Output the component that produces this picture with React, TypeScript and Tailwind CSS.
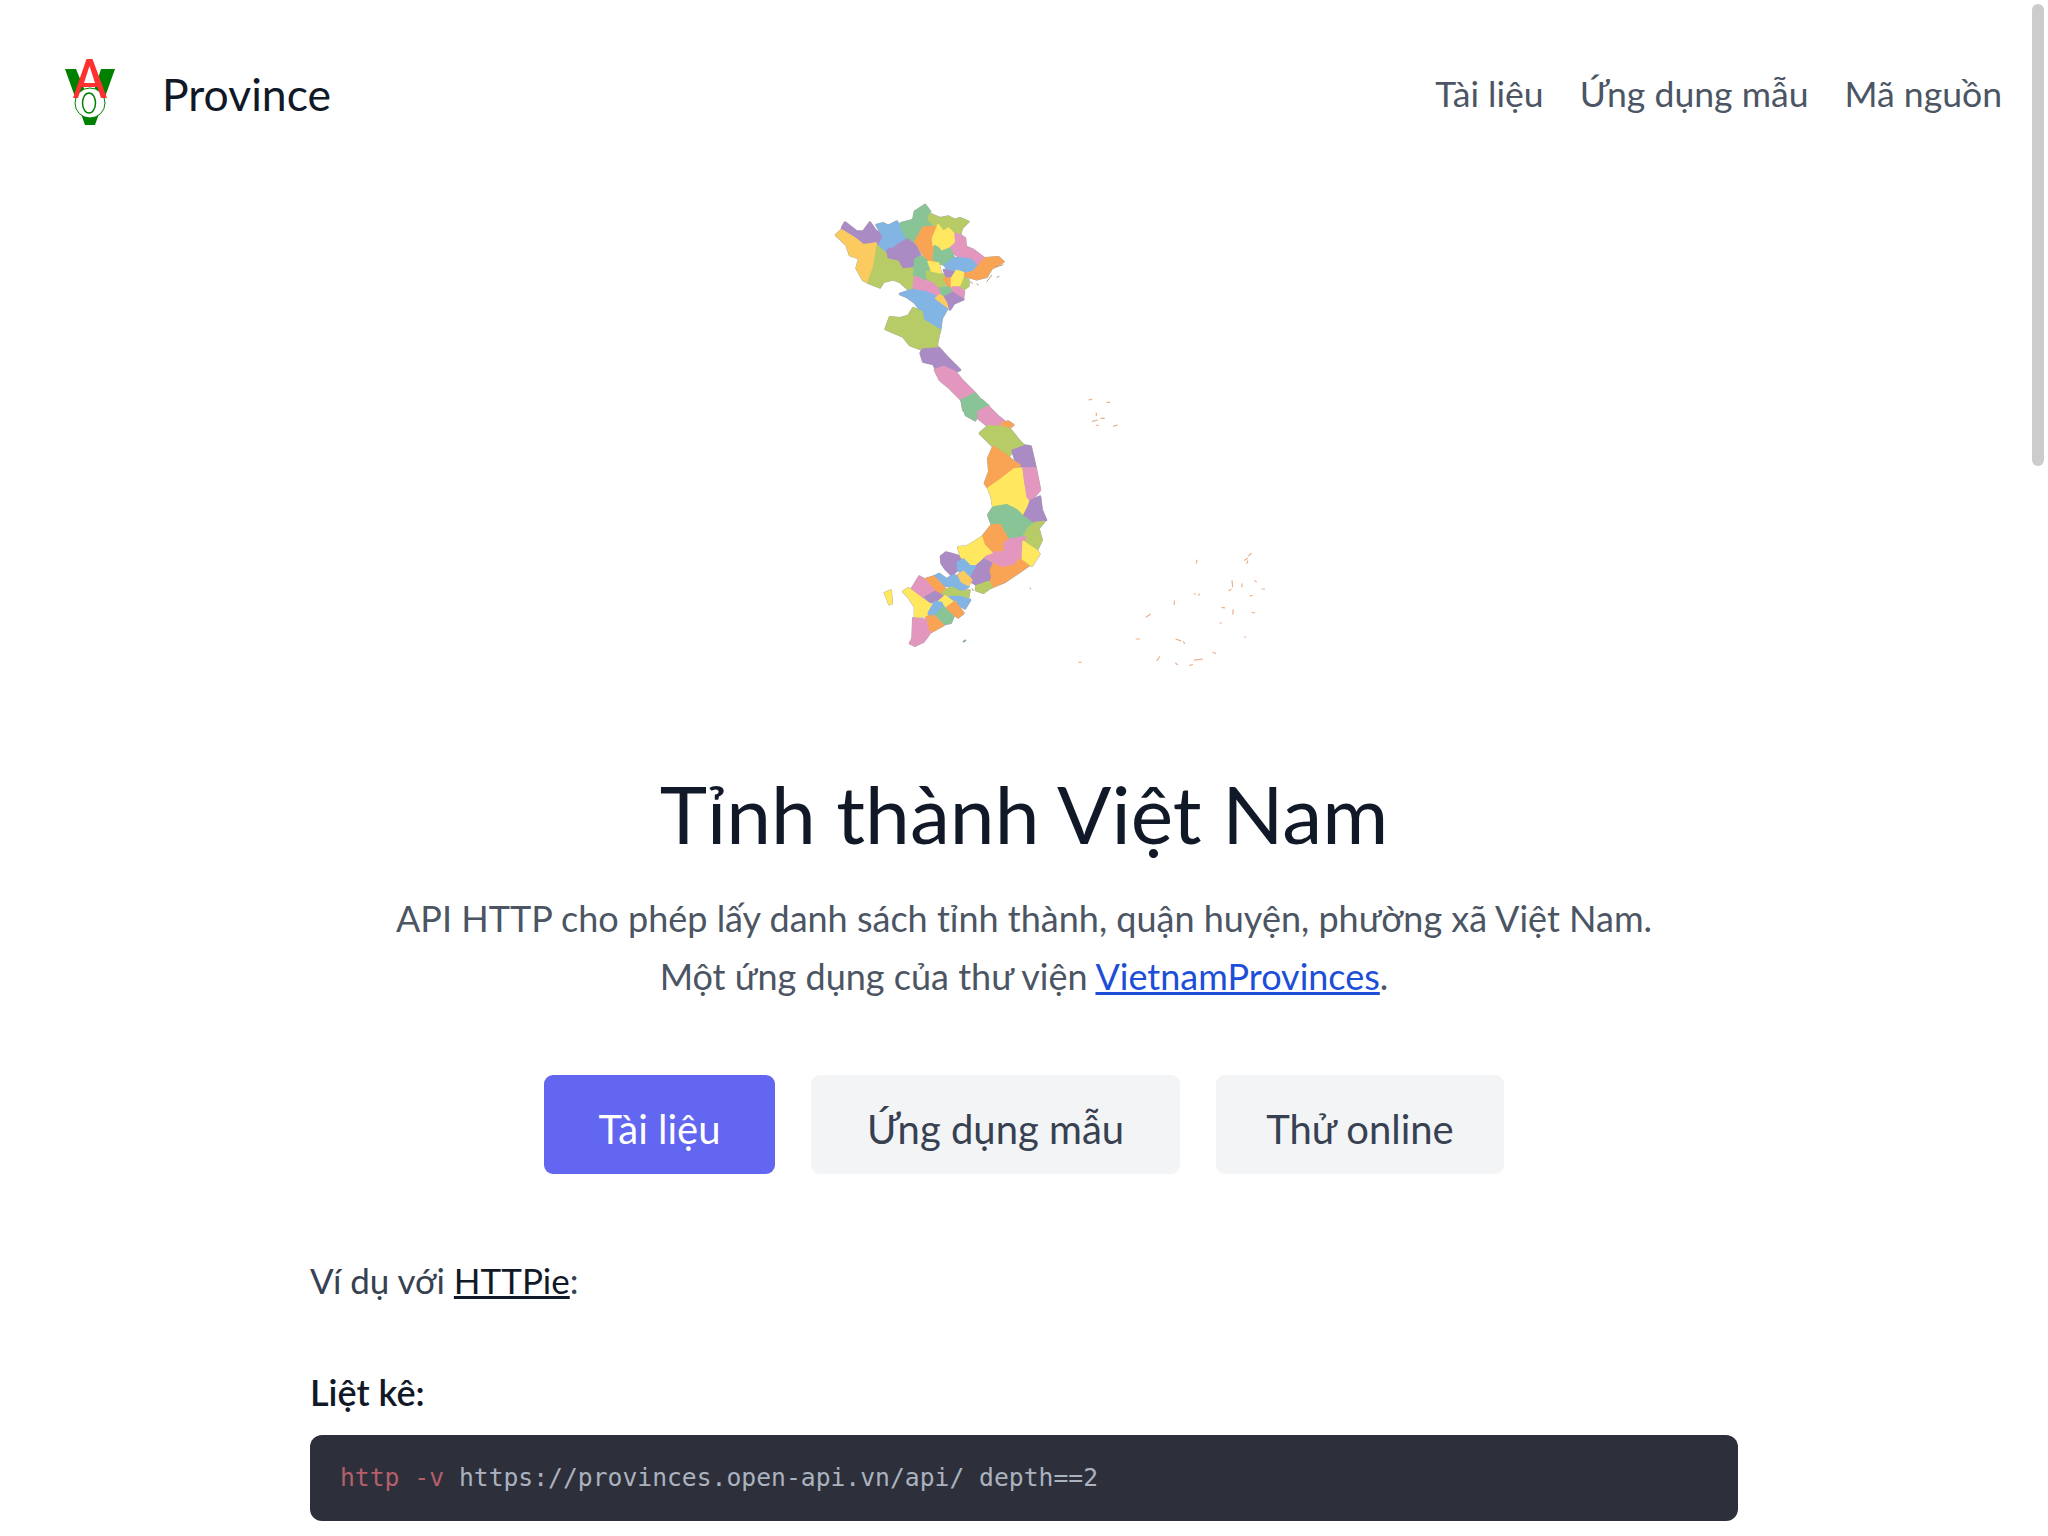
const C = {
  o: '#fccb5f',
  p: '#ab8bc4',
  b: '#82b4e4',
  g: '#88c496',
  l: '#b7cc67',
  a: '#f9a455',
  y: '#ffe75f',
  k: '#e497be',
};

// traced from the 3x crops, so each group gets its own translate + scale
const NORTH: [string, string][] = [
  ['p', '128,140 135,128 170,155 190,155 210,128 225,150 250,170 235,200 228,190 190,195 165,175 125,150'],
  ['o', '108,165 125,150 165,175 190,195 228,190 232,215 222,260 215,285 205,308 190,300 170,265 178,235 150,225 140,195'],
  ['b', '230,135 250,130 265,138 290,125 305,145 322,180 300,190 280,205 262,210 262,225 240,210 235,200 250,170'],
  ['g', '303,130 340,120 345,95 375,75 390,95 385,118 405,140 370,142 345,185 322,180 305,145'],
  ['l', '385,118 390,102 420,115 445,110 465,120 480,115 505,125 485,145 480,165 460,160 445,145 430,155 415,135 405,140'],
  ['a', '345,185 370,142 405,140 398,180 405,200 400,245 385,245 365,215'],
  ['k', '460,160 480,165 495,175 497,200 520,210 553,235 540,255 515,240 490,235 470,225 450,205 462,185'],
  ['y', '415,135 430,155 445,145 460,160 462,185 430,215 415,195 400,195 398,175'],
  ['g', '405,198 425,215 450,205 462,235 435,255 420,250 400,235'],
  ['l', '232,198 262,225 298,240 310,262 342,258 342,285 358,300 345,320 325,328 300,305 280,298 250,305 240,322 205,308 222,260'],
  ['p', '262,210 280,205 300,190 322,178 345,195 362,228 345,238 342,258 310,262 298,240 265,232'],
  ['g', '345,238 362,228 385,245 392,262 380,275 382,295 358,298 342,285'],
  ['l', '380,275 395,272 420,280 440,290 432,320 420,325 395,305 382,295'],
  ['y', '385,245 415,250 422,278 395,272'],
  ['b', '435,255 462,235 490,235 515,240 530,258 515,278 490,275 460,272 440,265'],
  ['p', '432,270 460,275 465,290 440,293'],
  ['a', '478,285 520,275 555,235 595,232 610,245 575,265 560,290 530,298 510,292'],
  ['a', '432,295 455,295 458,322 445,318'],
  ['l', '488,295 505,300 505,318 490,328 478,320'],
  ['y', '455,295 470,272 490,278 488,292 478,318 455,318'],
  ['k', '345,290 380,305 395,308 420,330 425,345 405,352 375,335 340,322'],
  ['g', '420,325 445,322 458,335 435,350 425,345'],
  ['k', '458,322 478,322 492,335 488,358 460,350'],
  ['b', '300,342 335,330 375,335 420,355 445,380 425,415 420,450 390,430 370,420 365,395 345,368 320,350'],
  ['o', '420,345 452,368 445,382 408,355'],
  ['p', '435,350 458,338 490,358 462,370 450,388 445,368'],
  ['l', '340,385 365,395 370,420 420,450 415,470 410,495 418,510 370,510 330,495 310,470 257,447 270,412 300,415 325,408'],
  ['p', '368,508 418,505 440,530 480,570 465,575 410,570 400,552 370,545 362,520'],
  ['k', '405,570 430,560 465,575 485,600 525,640 510,655 485,660 450,625 420,600'],
  ['g', '485,660 525,640 555,675 525,720 490,690'],
];

const SOUTH: [string, string][] = [
  ['g', '305,0 365,0 385,18 355,35 345,60 318,45 310,20'],
  ['k', '355,35 385,20 415,50 440,70 425,80 380,75 355,55'],
  ['a', '425,70 445,65 460,75 445,85 425,80'],
  ['l', '360,100 385,78 425,80 450,88 480,125 492,137 460,150 445,170 405,145 385,125'],
  ['p', '457,152 495,137 512,140 527,205 490,205 470,190'],
  ['a', '400,140 445,170 455,180 480,195 460,210 420,240 385,265 375,250 388,215 385,175'],
  ['y', '385,265 420,240 462,208 485,205 490,250 505,300 505,322 490,348 470,330 440,315 400,322 395,290'],
  ['k', '490,205 527,205 540,270 512,302 502,290'],
  ['p', '512,302 540,290 545,330 558,360 520,372 490,350 505,320'],
  ['g', '400,322 440,315 470,330 490,350 520,372 505,382 490,408 445,422 420,375 395,372 385,345'],
  ['l', '505,385 525,368 552,365 535,385 545,420 530,452 505,435 490,410'],
  ['a', '395,375 420,375 445,420 430,435 435,455 395,458 372,435 368,410'],
  ['k', '370,465 395,458 435,455 432,432 445,420 495,410 488,460 465,495 430,505 395,488'],
  ['y', '490,425 505,435 530,452 538,462 515,497 488,478'],
  ['y', '295,442 320,440 345,425 365,412 372,435 395,458 375,465 350,497 320,490 303,470'],
  ['a', '385,498 395,490 430,505 465,495 480,478 505,497 465,525 435,545 395,562 390,530'],
  ['p', '350,497 372,478 395,490 385,510 390,530 385,545 350,555 335,545 328,530'],
  ['l', '350,558 385,545 395,560 370,578 348,570'],
  ['p', '243,470 258,458 275,462 295,468 303,480 290,490 292,510 275,525 255,505 245,490'],
  ['b', '292,488 310,478 330,498 345,498 328,530 312,522 295,510'],
  ['b', '222,530 238,522 260,538 280,525 305,535 325,560 300,575 275,560 250,555'],
  ['o', '295,525 310,515 335,540 325,555 305,545'],
  ['a', '195,538 222,530 255,565 238,582 205,555'],
  ['k', '155,568 178,530 195,540 222,572 205,590 170,590'],
  ['l', '250,575 275,562 300,575 328,572 325,590 285,585 250,585'],
  ['p', '195,592 225,575 250,590 235,605 210,605'],
  ['y', '130,575 145,565 185,595 218,618 200,648 165,650 165,620 145,590'],
  ['b', '270,590 300,590 330,600 315,625 280,605'],
  ['y', '235,605 255,588 278,605 262,618'],
  ['b', '205,640 225,605 245,608 250,625 235,640 215,648'],
  ['a', '262,622 285,605 310,640 295,652 270,635'],
  ['g', '222,650 250,622 280,650 272,668 240,675'],
  ['a', '200,650 222,648 250,675 215,695 205,690'],
  ['k', '160,655 198,660 205,695 212,695 190,725 165,737 150,730 158,715'],
  ['y', '75,580 92,572 95,610 88,612 82,595'],
];

// Hoang Sa and Truong Sa specks: x, y, length, angle
const ISLANDS: [number, number, number, number][] = [
  [151, 59, 8, -10], [205, 67, 8, 0], [169, 103, 7, 90], [188, 115, 10, 0], [165, 122, 16, -15], [226, 137, 11, -15], [172, 136, 5, 0],
  [470, 545, 9, -80], [630, 524, 10, -45], [618, 538, 10, -30], [622, 546, 8, -70], [577, 611, 18, 85], [606, 616, 9, 90], [570, 630, 8, -30],
  [647, 604, 5, 30], [670, 627, 7, 0], [634, 647, 5, 0], [465, 642, 5, 0], [477, 644, 5, -40], [403, 668, 11, 90], [550, 683, 8, 10],
  [579, 696, 13, -85], [640, 698, 8, 15], [542, 729, 5, 0], [325, 707, 15, -35], [294, 777, 11, 0], [415, 780, 16, 20], [432, 788, 6, 60],
  [523, 819, 9, 20], [355, 836, 14, -55], [475, 839, 24, -8], [453, 855, 9, -20], [410, 852, 7, 40], [120, 847, 6, 0], [616, 771, 4, 0],
];

function Provinces({ items }: { items: [string, string][] }) {
  return (
    <g strokeLinejoin="round">
      {/* grey outline pass first, then the fills widened to close the seams */}
      {items.map(([, pts], i) => (
        <polygon key={i} points={pts} fill="#a8a8a8" stroke="#a8a8a8" strokeWidth="8" />
      ))}
      {items.map(([c, pts], i) => (
        <polygon key={i} points={pts} fill={C[c as keyof typeof C]} stroke={C[c as keyof typeof C]} strokeWidth="6" />
      ))}
    </g>
  );
}

function VietnamMap() {
  return (
    <svg viewBox="774 180 500 500" className="w-[500px] h-[500px] shrink-0">
      <g transform="translate(800 180) scale(0.3333)">
        <Provinces items={NORTH} />
        <path d="M510 305l8 6M530 310l5 6M560 305l16-20M590 292l8-3M585 262l25-8" stroke="#b89a80" strokeWidth="3" fill="none" />
      </g>
      <g transform="translate(860 400) scale(0.3333)">
        <Provinces items={SOUTH} />
        <path d="M510 563l3 5M335 565l6 8" stroke="#c9a070" strokeWidth="3" />
        <path d="M309 726l9-6" stroke="#88a890" strokeWidth="5" />
      </g>
      <g transform="translate(1040 380) scale(0.3333)" stroke="#eab08c" strokeWidth="3.5" strokeLinecap="round">
        {ISLANDS.map(([x, y, len, a], i) => (
          <line key={i} x1={x - len / 2} y1={y} x2={x + len / 2} y2={y} transform={`rotate(${a} ${x} ${y})`} />
        ))}
      </g>
    </svg>
  );
}

function Logo() {
  return (
    <svg viewBox="60 55 60 75" className="mb-[3px] w-[60px] h-[75px]">
      <polygon points="65,69 76,69 90,103 101,69 115,69 95,125 85,125" fill="#008000" />
      <circle cx="90" cy="103" r="15" fill="#fff" stroke="#008000" strokeWidth="1" />
      <ellipse cx="89" cy="103" rx="6.5" ry="10" fill="#fff" stroke="#008000" strokeWidth="1.5" />
      <polygon points="86.5,59 92.5,59 107,98 101,98 97.5,87 81.5,87 78,98 73,98" fill="#ff3030" />
      <polygon points="89.5,66 84,83 95,83" fill="#fff" />
    </svg>
  );
}

export default function App() {
  return (
    <div className="relative h-screen overflow-hidden bg-white font-['Lato',sans-serif] text-[#111827]">
      {/* overlay scrollbar */}
      <div className="absolute right-[4px] top-[4px] h-[462px] w-[12px] rounded-full bg-[#cccccc]" />

      <header className="flex items-center justify-between h-[188px] pl-[60px] pr-[46px]">
        <div className="flex items-center gap-[42px]">
          <Logo />
          <span className="text-[44.5px] leading-none">Province</span>
        </div>
        <nav className="flex gap-[36px] text-[35.6px] text-[#4b5563]">
          <a>Tài liệu</a>
          <a>Ứng dụng mẫu</a>
          <a>Mã nguồn</a>
        </nav>
      </header>

      <main className="flex flex-col items-center">
        <div className="-mt-[8px]">
          <VietnamMap />
        </div>
        <h1 className="mt-[85px] text-[80.3px] leading-[1.2]">Tỉnh thành Việt Nam</h1>
        <p className="mt-[28px] text-center text-[36px] leading-[58px] text-[#4b5563]">
          API HTTP cho phép lấy danh sách tỉnh thành, quận huyện, phường xã Việt Nam.
          <br />
          Một ứng dụng của thư viện <a className="text-[#1d4ed8] underline">VietnamProvinces</a>.
        </p>
        <div className="mt-[70px] flex gap-[36px] text-[40px]">
          <a className="flex h-[99px] w-[231px] items-center justify-center rounded-[9px] bg-[#6366f1] pt-[8px] text-white">Tài liệu</a>
          <a className="flex h-[99px] w-[369px] items-center justify-center rounded-[9px] bg-[#f3f4f6] pt-[8px] text-[#374151]">Ứng dụng mẫu</a>
          <a className="flex h-[99px] w-[288px] items-center justify-center rounded-[9px] bg-[#f3f4f6] pt-[8px] text-[#374151]">Thử online</a>
        </div>
        <section className="mt-[77px] w-[1428px]">
          <p className="text-[35px] leading-[58px] text-[#374151]">
            Ví dụ với <a className="text-[#111827] underline">HTTPie</a>:
          </p>
          <h4 className="mt-[54px] text-[36px] font-semibold leading-[58px]">Liệt kê:</h4>
          <pre className="mt-[14px] rounded-[12px] bg-[#2d303b] px-[30px] py-[24px] font-['DejaVu_Sans_Mono',monospace] text-[24.7px] leading-[38px] text-[#abb2bf]">
            <span className="text-[#b55f6a]">http -v</span> https://provinces.open-api.vn/api/ depth==2
          </pre>
        </section>
      </main>
    </div>
  );
}
